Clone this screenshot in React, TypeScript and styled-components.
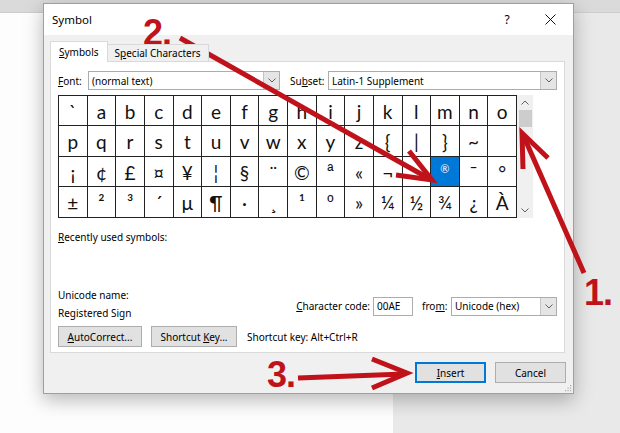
import React from "react";
import styled, { createGlobalStyle } from "styled-components";

const GlobalStyle = createGlobalStyle`
  html, body { margin: 0; padding: 0; }
  body {
    width: 620px;
    height: 433px;
    overflow: hidden;
    background: #e8e8e8;
    font-family: "Noto Sans", "Liberation Sans", sans-serif;
    color: #000;
  }
`;

//#region backdrop

const Stage = styled.div`
  position: relative;
  width: 620px;
  height: 433px;
  display: flex;
  flex-direction: column;
  overflow: hidden;
  background: #e8e8e8;
`;

const RibbonEdge = styled.div`
  height: 12px;
  background: #dadada;
  border-bottom: 1px solid #cdcdcd;
`;

const Workspace = styled.div`
  flex: 1;
  display: flex;
`;

const DocPage = styled.div`
  width: 393px;
  background: #fdfdfd;
`;

const Gutter = styled.div`
  flex: 1;
  background: #e9e9e9;
`;

//#endregion

//#region dialog frame

const Dialog = styled.div`
  position: absolute;
  left: 43px;
  top: 3px;
  width: 531px;
  height: 391px;
  box-sizing: border-box;
  border: 1px solid #7ea6d3;
  background: #f0f0f0;
  box-shadow: 0 6px 18px rgba(0, 0, 0, 0.28);
  display: flex;
  flex-direction: column;
`;

const TitleBar = styled.div`
  height: 31px;
  background: #fff;
  display: flex;
  align-items: center;
  padding-left: 8px;
`;

const Title = styled.span`
  flex: 1;
  font-size: 11.5px;
`;

const CaptionButton = styled.div<{ $w: number }>`
  width: ${p => p.$w}px;
  height: 31px;
  display: flex;
  align-items: center;
  justify-content: center;
  font-size: 12px;
`;

const Body = styled.div`
  flex: 1;
  display: flex;
  flex-direction: column;
  padding: 6px 8px 0 6px;
`;

//#endregion

//#region tabs

const TabStrip = styled.div`
  display: flex;
  align-items: flex-end;
  height: 21px;
  margin-bottom: -1px;
  position: relative;
  z-index: 1;
`;

const Tab = styled.div<{ $active?: boolean }>`
  box-sizing: border-box;
  height: ${p => (p.$active ? 21 : 18)}px;
  padding: 0 ${p => (p.$active ? 8 : 7)}px;
  display: flex;
  align-items: center;
  font-size: 10px;
  line-height: 11px;
  background: ${p => (p.$active ? "#fff" : "#f0f0f0")};
  border: 1px solid #d9d9d9;
  border-bottom: ${p => (p.$active ? "1px solid #fff" : "1px solid #d9d9d9")};
  margin-left: ${p => (p.$active ? 0 : -1)}px;
  padding-top: ${p => (p.$active ? 2 : 1)}px;
`;

const Key = styled.span`
  text-decoration: underline;
  text-underline-offset: 1px;
`;

const Panel = styled.div`
  box-sizing: border-box;
  height: 292px;
  background: #fff;
  border: 1px solid #d9d9d9;
  padding: 9px 7px 5px 7px;
  display: flex;
  flex-direction: column;
`;

//#endregion

//#region form bits

const FieldRow = styled.div`
  display: flex;
  align-items: center;
  height: 19px;
`;

const Label = styled.span<{ $w?: number; $gap?: number }>`
  font-size: 10px;
  white-space: nowrap;
  ${p => (p.$w ? `width: ${p.$w}px;` : "")}
  margin-left: ${p => p.$gap ?? 0}px;
`;

const SelectBox = styled.div<{ $w: number }>`
  box-sizing: border-box;
  width: ${p => p.$w}px;
  height: 19px;
  border: 1px solid #acacac;
  background: #fff;
  display: flex;
  align-items: center;
  font-size: 10px;
`;

const SelectText = styled.span`
  flex: 1;
  padding-left: 3px;
  white-space: nowrap;
`;

const DropButton = styled.div`
  width: 15px;
  height: 17px;
  background: #e5e5e5;
  border-left: 1px solid #c4c4c4;
  display: flex;
  align-items: center;
  justify-content: center;
`;

const Chevron = ({ up }: { up?: boolean }) => (
  <svg width="8" height="5" viewBox="0 0 8 5">
    <polyline
      points={up ? "0.5,4.5 4,1 7.5,4.5" : "0.5,0.5 4,4 7.5,0.5"}
      fill="none"
      stroke="#606060"
      strokeWidth="1"
    />
  </svg>
);

function Select({ width, value }: { width: number; value: string }) {
  return (
    <SelectBox $w={width}>
      <SelectText>{value}</SelectText>
      <DropButton>
        <Chevron />
      </DropButton>
    </SelectBox>
  );
}

const TextBox = styled.div`
  box-sizing: border-box;
  width: 40px;
  height: 19px;
  border: 1px solid #acacac;
  background: #fff;
  font-size: 10px;
  display: flex;
  align-items: center;
  padding-left: 3px;
`;

const Button = styled.div<{ $w: number; $default?: boolean }>`
  box-sizing: border-box;
  width: ${p => p.$w}px;
  height: 21px;
  background: #e1e1e1;
  border: 1px solid ${p => (p.$default ? "#0078d7" : "#adadad")};
  box-shadow: ${p => (p.$default ? "inset 0 0 0 1px #0078d7" : "none")};
  display: flex;
  align-items: center;
  justify-content: center;
  font-size: 10px;
`;

//#endregion

//#region character grid

const GridArea = styled.div`
  display: flex;
  margin-top: 5px;
`;

const CharGrid = styled.div`
  box-sizing: border-box;
  width: 459px;
  height: 123px;
  display: grid;
  grid-template-columns: repeat(16, 1fr);
  grid-auto-rows: 1fr;
  border-top: 1px solid #222;
  border-left: 1px solid #222;
  border-bottom: 1px solid #222;
`;

// ordinals use a face that draws them with the bar underneath
const ordinals = new Set(["ª", "º"]);

const Cell = styled.div<{ $selected?: boolean; $small?: boolean; $ordinal?: boolean }>`
  border-right: 1px solid #222;
  border-bottom: 1px solid #222;
  display: flex;
  align-items: center;
  justify-content: center;
  font-family: ${p => (p.$ordinal ? `"Liberation Sans"` : "Lato")}, "Liberation Sans", sans-serif;
  font-size: ${p => (p.$small ? 11 : p.$ordinal ? 17 : 19)}px;
  padding-top: ${p => (p.$small ? 0 : 2)}px;
  padding-bottom: ${p => (p.$small ? 6 : 0)}px;
  color: ${p => (p.$selected ? "#fff" : "#111")};
  background: ${p => (p.$selected ? "#0078d7" : "#fff")};
  &:nth-last-child(-n + 16) {
    border-bottom: none;
  }
`;

const ScrollBar = styled.div`
  width: 16px;
  height: 123px;
  background: #f0f0f0;
  display: flex;
  flex-direction: column;
  align-items: center;
`;

const ScrollArrow = styled.div`
  height: 15px;
  display: flex;
  align-items: center;
  justify-content: center;
`;

const Thumb = styled.div`
  width: 13px;
  height: 17px;
  background: #cdcdcd;
`;

const ScrollTrack = styled.div`
  flex: 1;
`;

const rows: string[][] = [
  [..."`abcdefghijklmno"],
  [..."pqrstuvwxyz{|}~", ""],
  ["¡", "¢", "£", "¤", "¥", "¦", "§", "¨", "©", "ª", "«", "¬", "", "®", "¯", "°"],
  [..."±²³´µ¶·¸¹º»¼½¾¿À"],
];

const selected = { row: 2, col: 13 };

function SymbolGrid() {
  return (
    <GridArea>
      <CharGrid>
        {rows.map((r, ri) =>
          r.map((ch, ci) => {
            const sel = ri === selected.row && ci === selected.col;
            return (
              <Cell key={`${ri}-${ci}`} $selected={sel} $small={sel} $ordinal={ordinals.has(ch)}>
                {ch}
              </Cell>
            );
          })
        )}
      </CharGrid>
      <ScrollBar>
        <ScrollArrow>
          <Chevron up />
        </ScrollArrow>
        <Thumb />
        <ScrollTrack />
        <ScrollArrow>
          <Chevron />
        </ScrollArrow>
      </ScrollBar>
    </GridArea>
  );
}

//#endregion

//#region lower panel

const RecentLabel = styled.div`
  font-size: 10px;
  margin-top: 12px;
  line-height: 14px;
`;

const InfoRow = styled.div`
  display: flex;
  align-items: flex-start;
  margin-top: auto;
`;

const NameBlock = styled.div`
  font-size: 10px;
  line-height: 18px;
`;

const CodeRow = styled.div`
  display: flex;
  align-items: center;
  margin-left: auto;
  margin-top: 10px;
  height: 20px;
`;

const ButtonRow = styled.div`
  display: flex;
  align-items: center;
  gap: 9px;
  margin-top: 4px;
`;

const ShortcutText = styled.span`
  font-size: 10px;
  margin-left: 1px;
`;

const Footer = styled.div`
  display: flex;
  justify-content: flex-end;
  gap: 9px;
  padding: 9px 0 0 0;
  margin-right: -1px;
`;

const Grip = styled.svg`
  position: absolute;
  right: 1px;
  bottom: 1px;
`;

//#endregion

//#region callouts

const Overlay = styled.svg`
  position: absolute;
  inset: 0;
  pointer-events: none;
`;

const StepNumber = styled.span<{ $x: number; $y: number }>`
  position: absolute;
  left: ${p => p.$x}px;
  top: ${p => p.$y}px;
  font-family: "Liberation Sans", Arial, sans-serif;
  font-weight: bold;
  font-size: 36px;
  line-height: 0.75;
  color: #c0121a;
  letter-spacing: -1px;
`;

const arrowRed = "#c0121a";

function Arrows() {
  return (
    <Overlay width="620" height="433" viewBox="0 0 620 433">
      <g fill="none" stroke={arrowRed} strokeWidth="5" strokeLinejoin="miter">
        <line x1="180" y1="38" x2="428" y2="178" />
        <polyline points="409,151 432,180 396,175" />
        <line x1="584" y1="273" x2="524" y2="137" />
        <polyline points="523,169 522,133 548,158" />
        <line x1="298" y1="378" x2="404" y2="374" />
        <polyline points="372,359 407,373 372,388" />
      </g>
    </Overlay>
  );
}

//#endregion

export default function App() {
  return (
    <>
      <GlobalStyle />
      <Stage>
        <RibbonEdge />
        <Workspace>
          <DocPage />
          <Gutter />
        </Workspace>

        <Dialog>
          <TitleBar>
            <Title>Symbol</Title>
            <CaptionButton $w={40}>?</CaptionButton>
            <CaptionButton $w={46}>
              <svg width="11" height="11" viewBox="0 0 11 11">
                <path d="M0.5 0.5 L10.5 10.5 M10.5 0.5 L0.5 10.5" stroke="#111" strokeWidth="1" />
              </svg>
            </CaptionButton>
          </TitleBar>

          <Body>
            <TabStrip>
              <Tab $active>
                <span><Key>S</Key>ymbols</span>
              </Tab>
              <Tab>
                <span>S<Key>p</Key>ecial Characters</span>
              </Tab>
            </TabStrip>

            <Panel>
              <FieldRow>
                <Label $w={30}><Key>F</Key>ont:</Label>
                <Select width={192} value="(normal text)" />
                <Label $w={38} $gap={10}>Su<Key>b</Key>set:</Label>
                <Select width={229} value="Latin-1 Supplement" />
              </FieldRow>

              <SymbolGrid />

              <RecentLabel><Key>R</Key>ecently used symbols:</RecentLabel>

              <InfoRow>
                <NameBlock>
                  <div>Unicode name:</div>
                  <div>Registered Sign</div>
                </NameBlock>
                <CodeRow>
                  <Label><Key>C</Key>haracter code:</Label>
                  <Label $gap={3} as="div">
                    <TextBox>00AE</TextBox>
                  </Label>
                  <Label $w={29} $gap={9}>fro<Key>m</Key>:</Label>
                  <Select width={106} value="Unicode (hex)" />
                </CodeRow>
              </InfoRow>

              <ButtonRow>
                <Button $w={84}><span><Key>A</Key>utoCorrect...</span></Button>
                <Button $w={86}><span>Shortcut <Key>K</Key>ey...</span></Button>
                <ShortcutText>Shortcut key: Alt+Ctrl+R</ShortcutText>
              </ButtonRow>
            </Panel>

            <Footer>
              <Button $w={71} $default><span><Key>I</Key>nsert</span></Button>
              <Button $w={71}>Cancel</Button>
            </Footer>
          </Body>

          <Grip width="8" height="8" viewBox="0 0 8 8">
            <g fill="#a9a9a9">
              <rect x="6" y="1" width="1.2" height="1.2" />
              <rect x="3.5" y="3.5" width="1.2" height="1.2" />
              <rect x="6" y="3.5" width="1.2" height="1.2" />
              <rect x="1" y="6" width="1.2" height="1.2" />
              <rect x="3.5" y="6" width="1.2" height="1.2" />
              <rect x="6" y="6" width="1.2" height="1.2" />
            </g>
          </Grip>
        </Dialog>

        <Arrows />
        <StepNumber $x={143} $y={19}>2.</StepNumber>
        <StepNumber $x={584} $y={279}>1.</StepNumber>
        <StepNumber $x={267} $y={361}>3.</StepNumber>
      </Stage>
    </>
  );
}
